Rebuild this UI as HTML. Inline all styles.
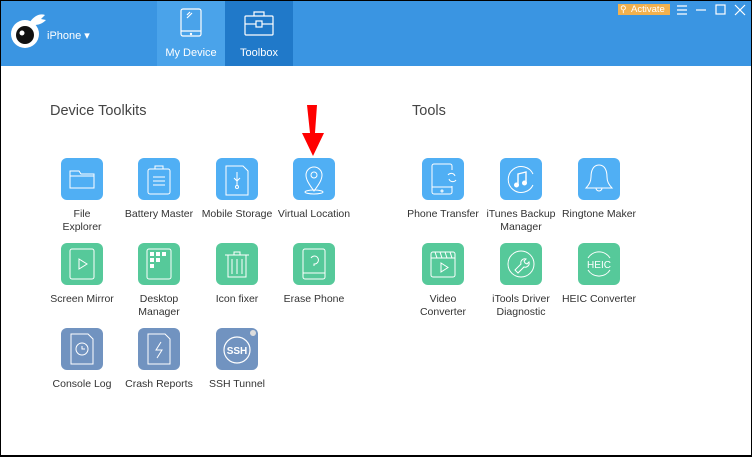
<!DOCTYPE html>
<html><head><meta charset="utf-8"><style>
*{margin:0;padding:0;box-sizing:border-box}
body{width:752px;height:457px;position:relative;overflow:hidden;background:#fff;font-family:"Liberation Sans",sans-serif}
#frame{position:absolute;left:0;top:0;width:752px;height:457px;border:1px solid #000;border-bottom-width:2px;pointer-events:none;z-index:9}
#hdr{position:absolute;left:0;top:0;width:752px;height:66px;background:#3a95e2}
.tab{position:absolute;top:0;height:66px;width:68px;color:#fff;font-size:11px;text-align:center}
.tab span{position:absolute;left:0;right:0;top:47px}
.ic{position:absolute;width:42px;height:42px;border-radius:6px}
.b{background:#50aff4}.g{background:#56c99a}.s{background:#7193c0}
.ic svg{width:42px;height:42px}
.lb{position:absolute;width:90px;text-align:center;font-size:10.5px;line-height:13px;color:#333}
h2{position:absolute;font-weight:normal;font-size:14.5px;color:#444}
</style></head><body>
<div id="hdr">
 <svg style="position:absolute;left:8px;top:10px" width="40" height="40" viewBox="0 0 40 40">
  <path d="M22 12 C26 6 32 3 37 5 L33 9 L38 10 C34 14 30 15 26 15Z" fill="#fff"/>
  <circle cx="17" cy="24" r="14" fill="#fff"/>
  <circle cx="17" cy="25" r="9" fill="#111"/>
  <circle cx="14" cy="23" r="2.5" fill="#fff"/>
 </svg>
 <div style="position:absolute;left:47px;top:29px;color:#fff;font-size:11px">iPhone ▾</div>
 <div class="tab" style="left:157px;background:#4aa3ea">
  <svg style="position:absolute;left:22px;top:8px" width="24" height="30" viewBox="0 0 24 30" fill="none" stroke="#fff" stroke-width="1.2"><rect x="2" y="1" width="20" height="27" rx="2"/><line x1="2" y1="23" x2="22" y2="23"/><circle cx="12" cy="26" r=".6" fill="#fff"/><line x1="8" y1="7" x2="11" y2="4"/><line x1="8" y1="10" x2="13" y2="5"/></svg>
  <span>My Device</span></div>
 <div class="tab" style="left:225px;background:#2079c9">
  <svg style="position:absolute;left:19px;top:10px" width="30" height="26" viewBox="0 0 30 26" fill="none" stroke="#fff" stroke-width="1.2"><rect x="1" y="6" width="28" height="19" rx="1"/><path d="M10 6V2h10v4"/><line x1="1" y1="14" x2="12" y2="14"/><line x1="18" y1="14" x2="29" y2="14"/><rect x="12" y="11" width="6" height="6"/></svg>
  <span>Toolbox</span></div>
 <div style="position:absolute;left:618px;top:4px;width:52px;height:11px;background:#f2b14e;color:#fff;font-size:9.5px;line-height:11px;padding-left:13px">Activate</div>
 <div style="position:absolute;left:620px;top:4px;color:#fff;font-size:9px;line-height:11px">⚲</div>
 <svg style="position:absolute;left:676px;top:4px" width="72" height="12" viewBox="0 0 72 12" stroke="#fff" fill="none" stroke-width="1.2"><path d="M1 2h10M1 6h10M1 10h10"/><path d="M20 6h10"/><rect x="40" y="1" width="9" height="9"/><path d="M59 1l10 10M69 1l-10 10"/></svg>
</div>

<h2 style="left:50px;top:103px">Device Toolkits</h2>
<h2 style="left:412px;top:103px">Tools</h2>

<svg style="position:absolute;left:300px;top:104px" width="26" height="54" viewBox="0 0 26 54"><path d="M7 1H17L15 29H24L13 52L2 29H10Z" fill="#f00"/></svg>

<div class="ic b" style="left:61px;top:158px"><svg viewBox="0 0 42 42" fill="none" stroke="#fff" stroke-width="1"><path d="M9 13h9l2 3h13v14H9z"/><line x1="9" y1="18" x2="33" y2="18"/></svg></div>
<div class="ic b" style="left:138px;top:158px"><svg viewBox="0 0 42 42" fill="none" stroke="#fff" stroke-width="1"><rect x="10" y="11" width="22" height="25" rx="2"/><rect x="17" y="8" width="8" height="3"/><path d="M15 19h12M15 23h12M15 27h12"/></svg></div>
<div class="ic b" style="left:216px;top:158px"><svg viewBox="0 0 42 42" fill="none" stroke="#fff" stroke-width="1"><path d="M10 8h17l5 5v24H10z"/><path d="M21 14v14M18 20l3 3 3-3"/><circle cx="21" cy="29" r="1.5"/></svg></div>
<div class="ic b" style="left:293px;top:158px"><svg viewBox="0 0 42 42" fill="none" stroke="#fff" stroke-width="1"><path d="M21 33C15 25 13 21 13 17a8 8 0 0 1 16 0c0 4-2 8-8 16z"/><circle cx="21" cy="17" r="3"/><ellipse cx="21" cy="34" rx="9" ry="2"/></svg></div>
<div class="lb" style="left:37px;top:208px">File<br>Explorer</div>
<div class="lb" style="left:114px;top:208px">Battery Master</div>
<div class="lb" style="left:192px;top:208px">Mobile Storage</div>
<div class="lb" style="left:269px;top:208px">Virtual Location</div>

<div class="ic g" style="left:61px;top:243px"><svg viewBox="0 0 42 42" fill="none" stroke="#fff" stroke-width="1"><rect x="9" y="6" width="24" height="30" rx="2"/><path d="M18 16v10l8-5z"/></svg></div>
<div class="ic g" style="left:138px;top:243px"><svg viewBox="0 0 42 42" fill="none" stroke="#fff" stroke-width="1"><rect x="9" y="6" width="24" height="30" rx="2"/><g fill="#fff" stroke="none"><rect x="12" y="9" width="4" height="4"/><rect x="18" y="9" width="4" height="4"/><rect x="24" y="9" width="4" height="4"/><rect x="12" y="15" width="4" height="4"/><rect x="18" y="15" width="4" height="4"/><rect x="12" y="21" width="4" height="4"/></g></svg></div>
<div class="ic g" style="left:216px;top:243px"><svg viewBox="0 0 42 42" fill="none" stroke="#fff" stroke-width="1"><path d="M9 12h24M12 12v22h18V12M18 12V9h6v3M16 16v15M21 16v15M26 16v15"/></svg></div>
<div class="ic g" style="left:293px;top:243px"><svg viewBox="0 0 42 42" fill="none" stroke="#fff" stroke-width="1"><rect x="10" y="6" width="22" height="30" rx="2"/><line x1="10" y1="30" x2="32" y2="30"/><path d="M18 15a4 4 0 1 1 3 6v2"/></svg></div>
<div class="lb" style="left:37px;top:293px">Screen Mirror</div>
<div class="lb" style="left:114px;top:293px">Desktop<br>Manager</div>
<div class="lb" style="left:192px;top:293px">Icon fixer</div>
<div class="lb" style="left:269px;top:293px">Erase Phone</div>

<div class="ic s" style="left:61px;top:328px"><svg viewBox="0 0 42 42" fill="none" stroke="#fff" stroke-width="1"><path d="M10 6h17l5 5v25H10z"/><circle cx="21" cy="21" r="6"/><path d="M21 18v3h3"/></svg></div>
<div class="ic s" style="left:138px;top:328px"><svg viewBox="0 0 42 42" fill="none" stroke="#fff" stroke-width="1"><path d="M10 6h17l5 5v25H10z"/><path d="M23 14l-5 8h6l-5 8"/></svg></div>
<div class="ic s" style="left:216px;top:328px"><svg viewBox="0 0 42 42" fill="none" stroke="#fff" stroke-width="1.2"><circle cx="21" cy="22" r="13"/><circle cx="37" cy="5" r="3" fill="#ddd" stroke="none"/><text x="21" y="26" fill="#fff" stroke="none" font-size="10" font-weight="bold" text-anchor="middle" font-family="Liberation Sans">SSH</text></svg></div>
<div class="lb" style="left:37px;top:378px">Console Log</div>
<div class="lb" style="left:114px;top:378px">Crash Reports</div>
<div class="lb" style="left:192px;top:378px">SSH Tunnel</div>

<div class="ic b" style="left:422px;top:158px"><svg viewBox="0 0 42 42" fill="none" stroke="#fff" stroke-width="1"><path d="M30 28v6a2 2 0 0 1-2 2H12a2 2 0 0 1-2-2V8a2 2 0 0 1 2-2h16a2 2 0 0 1 2 2v4"/><line x1="10" y1="29" x2="30" y2="29"/><circle cx="20" cy="33" r="1"/><path d="M26 17a4 4 0 0 1 7 1M34 22a4 4 0 0 1-7-1"/></svg></div>
<div class="ic b" style="left:500px;top:158px"><svg viewBox="0 0 42 42" fill="none" stroke="#fff" stroke-width="1"><path d="M33 16A13 13 0 1 0 33 27"/><path d="M18 27V16l8-2v11" stroke-width="1.4"/><circle cx="16.5" cy="27" r="2" fill="#fff"/><circle cx="24.5" cy="25" r="2" fill="#fff"/></svg></div>
<div class="ic b" style="left:578px;top:158px"><svg viewBox="0 0 42 42" fill="none" stroke="#fff" stroke-width="1"><path d="M21 7c-6 0-8 6-8 12 0 6-4 10-5 11h26c-1-1-5-5-5-11 0-6-2-12-8-12z"/><path d="M18 30a3 3 0 0 0 6 0"/></svg></div>
<div class="lb" style="left:398px;top:208px">Phone Transfer</div>
<div class="lb" style="left:476px;top:208px">iTunes Backup<br>Manager</div>
<div class="lb" style="left:554px;top:208px">Ringtone Maker</div>

<div class="ic g" style="left:422px;top:243px"><svg viewBox="0 0 42 42" fill="none" stroke="#fff" stroke-width="1"><rect x="9" y="9" width="24" height="25" rx="2"/><path d="M9 15h24M13 9l2 6M18 9l2 6M23 9l2 6M28 9l2 6M19 20v9l7-4.5z"/></svg></div>
<div class="ic g" style="left:500px;top:243px"><svg viewBox="0 0 42 42" fill="none" stroke="#fff" stroke-width="1"><circle cx="21" cy="21" r="13"/><path d="M15 27l6-6a4 4 0 0 1 5-5l-2 2 1 2 2 1 2-2a4 4 0 0 1-5 5l-6 6z"/></svg></div>
<div class="ic g" style="left:578px;top:243px"><svg viewBox="0 0 42 42" fill="none" stroke="#fff" stroke-width="1"><path d="M10 15a13 13 0 0 1 22 0M32 27a13 13 0 0 1-22 0"/><text x="21" y="25" fill="#fff" stroke="none" font-size="10" text-anchor="middle" font-family="Liberation Sans">HEIC</text></svg></div>
<div class="lb" style="left:398px;top:293px">Video<br>Converter</div>
<div class="lb" style="left:476px;top:293px">iTools Driver<br>Diagnostic</div>
<div class="lb" style="left:554px;top:293px">HEIC Converter</div>

<div id="frame"></div>
</body></html>
